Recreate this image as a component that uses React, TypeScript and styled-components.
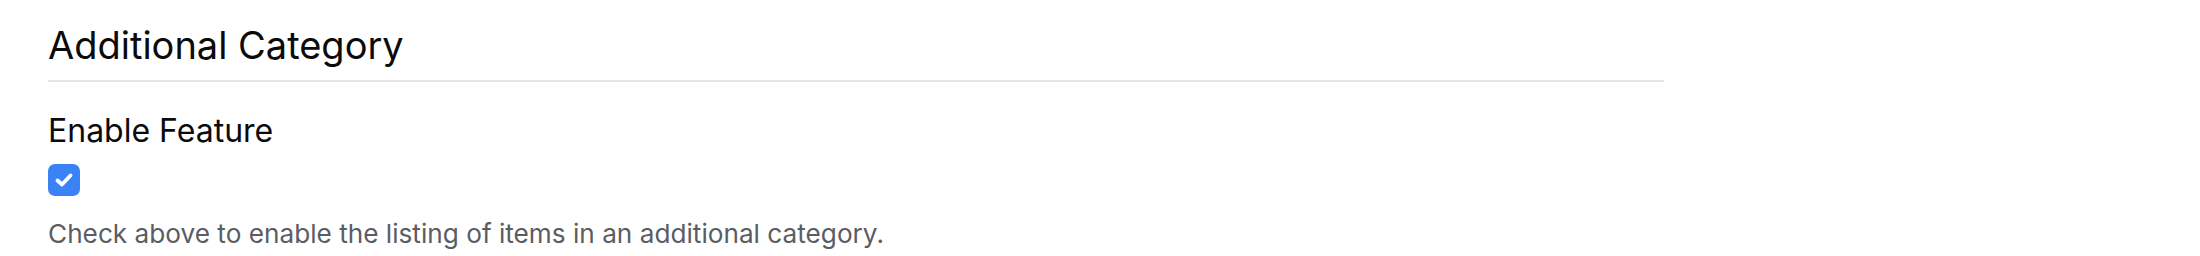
import styled, { createGlobalStyle } from "styled-components";

const GlobalStyle = createGlobalStyle`
  body {
    margin: 0;
    background: #ffffff;
    font-family: Inter, "Noto Sans", sans-serif;
  }
`;

const Page = styled.div`
  padding: 21px 48px 0;
`;

const Section = styled.section`
  width: 1616px;
`;

const Title = styled.h2`
  margin: 0;
  padding-bottom: 11px;
  border-bottom: 2px solid #e5e5e8;
  font-size: 38px;
  line-height: 48px;
  font-weight: 400;
  color: #0b0b0c;
`;

const Field = styled.div`
  display: flex;
  flex-direction: column;
  align-items: flex-start;
  margin-top: 29px;
`;

const Label = styled.label`
  font-size: 32px;
  line-height: 40px;
  color: #0b0b0c;
`;

const Box = styled.span<{ checked: boolean }>`
  margin-top: 13px;
  width: 32px;
  height: 32px;
  border-radius: 7px;
  display: flex;
  align-items: center;
  justify-content: center;
  background: ${(p) => (p.checked ? "#3b82f6" : "#ffffff")};
  border: ${(p) => (p.checked ? "none" : "2px solid #d4d4d8")};
  box-sizing: border-box;
`;

const Help = styled.p`
  margin: 22px 0 0;
  font-size: 26.2px;
  line-height: 32px;
  color: #5a5d63;
`;

function Checkbox({ checked }: { checked: boolean }) {
  return (
    <Box checked={checked} role="checkbox" aria-checked={checked}>
      {checked && (
        <svg width="20" height="20" viewBox="0 0 20 20" fill="none">
          <path
            d="M3.5 10.5 L8 14.5 L16.5 5.5"
            stroke="#ffffff"
            strokeWidth="3.8"
            strokeLinecap="round"
            strokeLinejoin="round"
          />
        </svg>
      )}
    </Box>
  );
}

export default function App() {
  return (
    <>
      <GlobalStyle />
      <Page>
        <Section>
          <Title>Additional Category</Title>
          <Field>
            <Label>Enable Feature</Label>
            <Checkbox checked />
            <Help>Check above to enable the listing of items in an additional category.</Help>
          </Field>
        </Section>
      </Page>
    </>
  );
}
